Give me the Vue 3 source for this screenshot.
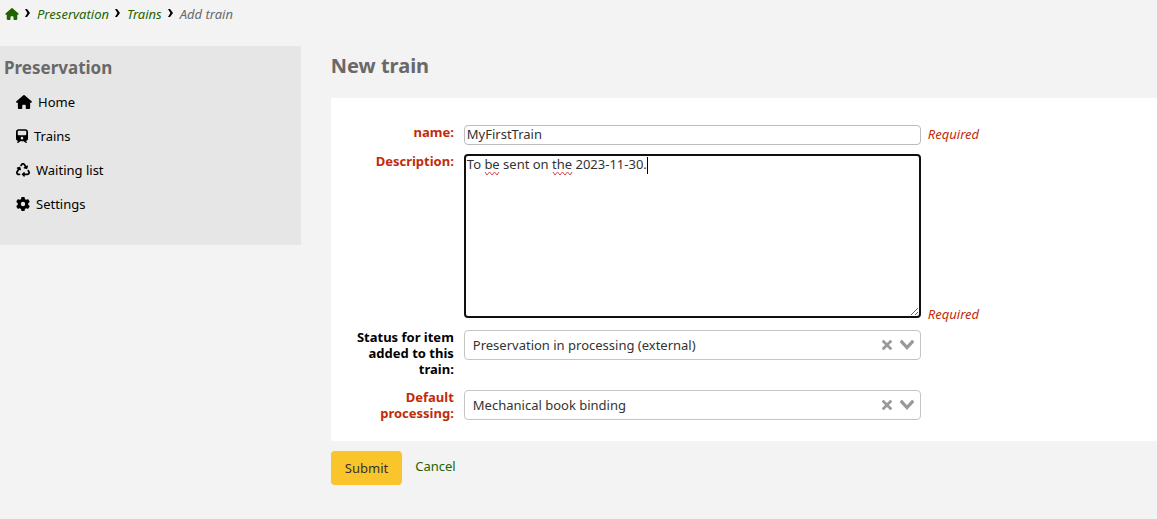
<script setup>
import { ref } from 'vue'

const icons = {
  home: {
    width: 16,
    box: '0 0 576 512',
    path: 'M575.8 255.5c0 18-15 32.1-32 32.1h-32l.7 160.2c0 2.7-.2 5.4-.5 8.1V472c0 22.1-17.9 40-40 40H456c-1.1 0-2.2 0-3.3-.1c-1.4 .1-2.8 .1-4.2 .1H416 392c-22.1 0-40-17.9-40-40V448 384c0-17.7-14.3-32-32-32H256c-17.7 0-32 14.3-32 32v64 24c0 22.1-17.9 40-40 40H160 128.1c-1.5 0-3-.1-4.5-.2c-1.2 .1-2.4 .2-3.6 .2H104c-22.1 0-40-17.9-40-40V360c0-.9 0-1.9 .1-2.8V287.6H32c-18 0-32-14-32-32.1c0-9 3-17 10-24L266.4 8c7-7 15-8 22-8s15 2 21 7L564.8 231.5c8 7 12 15 11 24z',
  },
  train: {
    width: 12,
    box: '0 0 448 512',
    path: 'M96 0C43 0 0 43 0 96V352c0 48 35.2 87.7 81.1 94.9l-46 46C28.1 499.9 33.1 512 43 512H82.7c8.5 0 16.6-3.4 22.6-9.4L160 448H288l54.6 54.6c6 6 14.1 9.4 22.6 9.4H405c10 0 15-12.1 7.9-19.1l-46-46c46-7.1 81.1-46.9 81.1-94.9V96c0-53-43-96-96-96H96zM64 96c0-17.7 14.3-32 32-32H352c17.7 0 32 14.3 32 32v96c0 17.7-14.3 32-32 32H96c-17.7 0-32-14.3-32-32V96zM224 288a48 48 0 1 1 0 96 48 48 0 1 1 0-96z',
  },
  recycle: {
    width: 14,
    box: '0 0 512 512',
    path: 'M174.7 45.1C192.2 17 223 0 256 0s63.8 17 81.3 45.1l38.6 61.7 27-15.6c8.4-4.9 18.9-4.2 26.6 1.7s11.1 15.9 8.6 25.3l-23.4 87.4c-3.4 12.8-16.6 20.4-29.4 17l-87.4-23.4c-9.4-2.5-16.3-10.4-17.6-20s3.4-19.1 11.8-23.9l28.4-16.4L283 79c-5.8-9.3-16-15-27-15s-21.2 5.7-27 15l-17.5 28c-9.2 14.8-28.6 19.5-43.6 10.5c-15.3-9.2-20.2-29.2-10.7-44.4l17.5-28zM429.5 251.9c15-9 34.4-4.3 43.6 10.5l24.4 39.1c9.4 15.1 14.4 32.4 14.6 50.2c.3 53.1-42.7 96.4-95.8 96.4L320 448v32c0 9.7-5.8 18.5-14.8 22.2s-19.3 1.7-26.2-5.2l-64-64c-9.4-9.4-9.4-24.6 0-33.9l64-64c6.9-6.9 17.2-8.9 26.2-5.2s14.8 12.5 14.8 22.2v32l96.2 0c17.6 0 31.9-14.4 31.8-32c0-5.9-1.7-11.7-4.8-16.7l-24.4-39.1c-9.5-15.2-4.7-35.2 10.7-44.4zm-364.6-31L36 204.2c-8.4-4.9-13.1-14.3-11.8-23.9s8.2-17.5 17.6-20l87.4-23.4c12.8-3.4 26 4.2 29.4 17L182 241.2c2.5 9.4-.9 19.3-8.6 25.3s-18.2 6.6-26.6 1.7l-26.5-15.3L68.8 335.3c-3.1 5-4.8 10.8-4.8 16.7c-.1 17.6 14.2 32 31.8 32l32.2 0c17.7 0 32 14.3 32 32s-14.3 32-32 32l-32.2 0C42.7 448-.3 404.8 0 351.6c.1-17.8 5.1-35.1 14.6-50.2l50.3-80.5z',
  },
  gear: {
    width: 14,
    box: '0 0 512 512',
    path: 'M495.9 166.6c3.2 8.7 .5 18.4-6.4 24.6l-43.3 39.4c1.1 8.3 1.7 16.8 1.7 25.4s-.6 17.1-1.7 25.4l43.3 39.4c6.9 6.2 9.6 15.9 6.4 24.6c-4.4 11.9-9.7 23.3-15.8 34.3l-4.7 8.1c-6.6 11-14 21.4-22.1 31.2c-5.9 7.2-15.7 9.6-24.5 6.8l-55.7-17.7c-13.4 10.3-28.2 18.9-44 25.4l-12.5 57.1c-2 9.1-9 16.3-18.2 17.8c-13.8 2.3-28 3.5-42.5 3.5s-28.7-1.2-42.5-3.5c-9.2-1.5-16.2-8.7-18.2-17.8l-12.5-57.1c-15.8-6.5-30.6-15.1-44-25.4L83.1 425.9c-8.8 2.8-18.6 .3-24.5-6.8c-8.1-9.8-15.5-20.2-22.1-31.2l-4.7-8.1c-6.1-11-11.4-22.4-15.8-34.3c-3.2-8.7-.5-18.4 6.4-24.6l43.3-39.4C64.6 273.1 64 264.6 64 256s.6-17.1 1.7-25.4L22.4 191.2c-6.9-6.2-9.6-15.9-6.4-24.6c4.4-11.9 9.7-23.3 15.8-34.3l4.7-8.1c6.6-11 14-21.4 22.1-31.2c5.9-7.2 15.7-9.6 24.5-6.8l55.7 17.7c13.4-10.3 28.2-18.9 44-25.4l12.5-57.1c2-9.1 9-16.3 18.2-17.8C227.3 1.2 241.5 0 256 0s28.7 1.2 42.5 3.5c9.2 1.5 16.2 8.7 18.2 17.8l12.5 57.1c15.8 6.5 30.6 15.1 44 25.4l55.7-17.7c8.8-2.8 18.6-.3 24.5 6.8c8.1 9.8 15.5 20.2 22.1 31.2l4.7 8.1c6.1 11 11.4 22.4 15.8 34.3zM256 336a80 80 0 1 0 0-160 80 80 0 1 0 0 160z',
  },
}

const menu = [
  { label: 'Home', icon: icons.home },
  { label: 'Trains', icon: icons.train },
  { label: 'Waiting list', icon: icons.recycle },
  { label: 'Settings', icon: icons.gear },
]

const name = ref('MyFirstTrain')
const description = ref('To be sent on the 2023-11-30.')
const selects = ref([
  {
    id: 'status',
    label: 'Status for item added to this train:',
    required: false,
    value: 'Preservation in processing (external)',
    options: ['Preservation in processing (external)'],
  },
  {
    id: 'processing',
    label: 'Default processing:',
    required: true,
    value: 'Mechanical book binding',
    options: ['Mechanical book binding'],
  },
])
</script>

<template>
  <div class="page">
    <nav class="breadcrumb" aria-label="Breadcrumb">
      <a href="#" aria-label="Home">
        <svg class="crumb-home" width="14" height="12" :viewBox="icons.home.box" aria-hidden="true"><path :d="icons.home.path" /></svg>
      </a>
      <svg class="sep" width="5" height="8" viewBox="0 0 5 8" aria-hidden="true"><path d="M0 0H2L5 4L2 8H0L2.4 4Z" /></svg>
      <a href="#">Preservation</a>
      <svg class="sep" width="5" height="8" viewBox="0 0 5 8" aria-hidden="true"><path d="M0 0H2L5 4L2 8H0L2.4 4Z" /></svg>
      <a href="#">Trains</a>
      <svg class="sep" width="5" height="8" viewBox="0 0 5 8" aria-hidden="true"><path d="M0 0H2L5 4L2 8H0L2.4 4Z" /></svg>
      <span class="current" aria-current="page">Add train</span>
    </nav>

    <div class="columns">
      <aside class="sidebar">
        <h2>Preservation</h2>
        <ul>
          <li v-for="item in menu" :key="item.label">
            <a href="#">
              <svg :width="item.icon.width" height="14" :viewBox="item.icon.box" aria-hidden="true"><path :d="item.icon.path" /></svg>
              {{ item.label }}
            </a>
          </li>
        </ul>
      </aside>

      <main>
        <h1>New train</h1>
        <form @submit.prevent>
          <div class="panel">
            <div class="row name-row">
              <label class="required" for="name">name:</label>
              <input id="name" v-model="name" type="text" required />
              <span class="hint">Required</span>
            </div>
            <div class="row">
              <label class="required" for="description">Description:</label>
              <div class="area">
                <textarea id="description" v-model="description" required spellcheck="false"></textarea>
                <svg class="marks" width="184" height="20" viewBox="0 0 184 20" aria-hidden="true">
                  <path class="wave" d="M19 15l2 3l2.500-3l2.500 3l2.500-3l2.500 3l2-3M87 15l2 3l2.500-3l2.500 3l2.500-3l2.500 3l2.500-3l2.500 3l2-3" />
                  <path class="caret" d="M181.500 0V17" />
                </svg>
              </div>
              <span class="hint bottom">Required</span>
            </div>
            <div v-for="field in selects" :key="field.id" class="row">
              <label :class="{ required: field.required }" :for="field.id">{{ field.label }}</label>
              <div class="picker">
                <select :id="field.id" v-model="field.value">
                  <option v-for="option in field.options" :key="option">{{ option }}</option>
                </select>
                <button class="clear" type="button" aria-label="Clear selected" @click="field.value = ''">
                  <svg width="10" height="10" viewBox="0 0 10 10" aria-hidden="true"><path d="M6.895 5l2.843-2.843c.349-.349.349-.914 0-1.264L9.107.262c-.349-.349-.915-.349-1.264 0L5 3.105 2.157.262c-.349-.349-.914-.349-1.264 0L.262.893c-.349.349-.349.915 0 1.264L3.105 5 .262 7.843c-.349.349-.349.914 0 1.264l.631.631c.349.349.915.349 1.264 0L5 6.895l2.843 2.843c.349.349.915.349 1.264 0l.631-.631c.349-.349.349-.915 0-1.264L6.895 5z" /></svg>
                </button>
                <svg class="arrow" width="14" height="10" viewBox="0 0 14 10" aria-hidden="true"><path d="M9.211 7.6l4.484-4.868c.407-.442.407-1.158 0-1.6l-.737-.8c-.407-.442-1.067-.442-1.475 0L7 5.199 2.517.331c-.407-.442-1.067-.442-1.475 0l-.737.8c-.407.442-.407 1.159 0 1.601l4.483 4.867L7 10l2.211-2.4z" /></svg>
              </div>
            </div>
          </div>
          <div class="actions">
            <button class="submit" type="submit">Submit</button>
            <a href="#">Cancel</a>
          </div>
        </form>
      </main>
    </div>
  </div>
</template>

<style>
body {
  background: #f3f3f3;
}
</style>

<style scoped>
.page {
  font: 13px/16px "Noto Sans", sans-serif;
  color: #000;
}
.page * {
  box-sizing: border-box;
}
a {
  color: #1f6400;
  text-decoration: none;
}
svg {
  fill: currentColor;
  flex: none;
}
input,
textarea,
select,
button {
  margin: 0;
  font: inherit;
  color: #333;
}
.breadcrumb {
  display: flex;
  align-items: center;
  height: 28px;
  padding-left: 5px;
  font-style: italic;
}
.crumb-home {
  display: block;
}
.sep {
  margin: 0 7px 2px 6px;
}
.current {
  color: #696969;
}
.columns {
  display: grid;
  grid-template-columns: 26% minmax(0, 1fr);
  gap: 30px;
  align-items: start;
  padding-top: 18px;
}
.sidebar {
  padding: 10px 4px 24px;
  background: #e6e6e6;
}
h1,
h2 {
  margin: 0;
  color: #696969;
  font-weight: 700;
}
h2 {
  font-size: 17px;
  line-height: 24px;
}
h1 {
  font-size: 20px;
  line-height: 24px;
  padding: 8px 0 20px;
}
ul {
  margin: 5px 0 0;
  padding: 0;
  list-style: none;
}
li a {
  display: flex;
  align-items: center;
  gap: 6px;
  height: 34px;
  padding-left: 12px;
  color: #000;
}
.panel {
  padding: 27px 20px 19px;
  background: #fff;
}
.row {
  display: grid;
  grid-template-columns: 103px minmax(0, 457px) auto;
  column-gap: 10px;
  justify-content: start;
  align-items: start;
  margin-bottom: 12px;
}
.row:last-child {
  margin-bottom: 0;
}
.name-row {
  margin-bottom: 9px;
}
label {
  margin: -1px 0 1px;
  font-weight: 700;
  text-align: right;
}
.required {
  color: #c02b0a;
}
.hint {
  margin-left: -3px;
  padding-top: 1px;
  color: #c02b0a;
  font-style: italic;
}
.bottom {
  align-self: end;
  margin-bottom: -4px;
}
input {
  width: 100%;
  height: 20px;
  padding: 0 2px 2px;
  border: 1px solid #bcbcbc;
  border-radius: 4px;
  background: #fff;
}
.area {
  position: relative;
}
textarea {
  display: block;
  width: 100%;
  height: 164px;
  padding: 0 1px;
  border: 2px solid #101010;
  border-radius: 4px;
  background: #fff;
  outline: none;
  resize: both;
}
.marks {
  position: absolute;
  top: 3px;
  left: 2px;
  pointer-events: none;
}
.marks path {
  fill: none;
}
.wave {
  stroke: #d9484b;
}
.caret {
  stroke: #000;
}
.picker {
  position: relative;
  color: #999;
}
select {
  display: block;
  width: 100%;
  height: 30px;
  padding: 0 60px 0 8px;
  border: 1px solid #c5c5c5;
  border-radius: 4px;
  background: #fff;
  appearance: none;
}
.clear {
  position: absolute;
  top: 10px;
  right: 29px;
  padding: 0;
  border: 0;
  background: none;
  color: inherit;
  line-height: 0;
}
.arrow {
  position: absolute;
  top: 10px;
  right: 7px;
  pointer-events: none;
}
.actions {
  display: flex;
  align-items: center;
  gap: 13px;
  padding-top: 10px;
}
.actions a {
  padding-bottom: 4px;
}
.submit {
  height: 34px;
  padding: 0 14px;
  border: 0;
  border-radius: 4px;
  background: #fac42b;
}
</style>
